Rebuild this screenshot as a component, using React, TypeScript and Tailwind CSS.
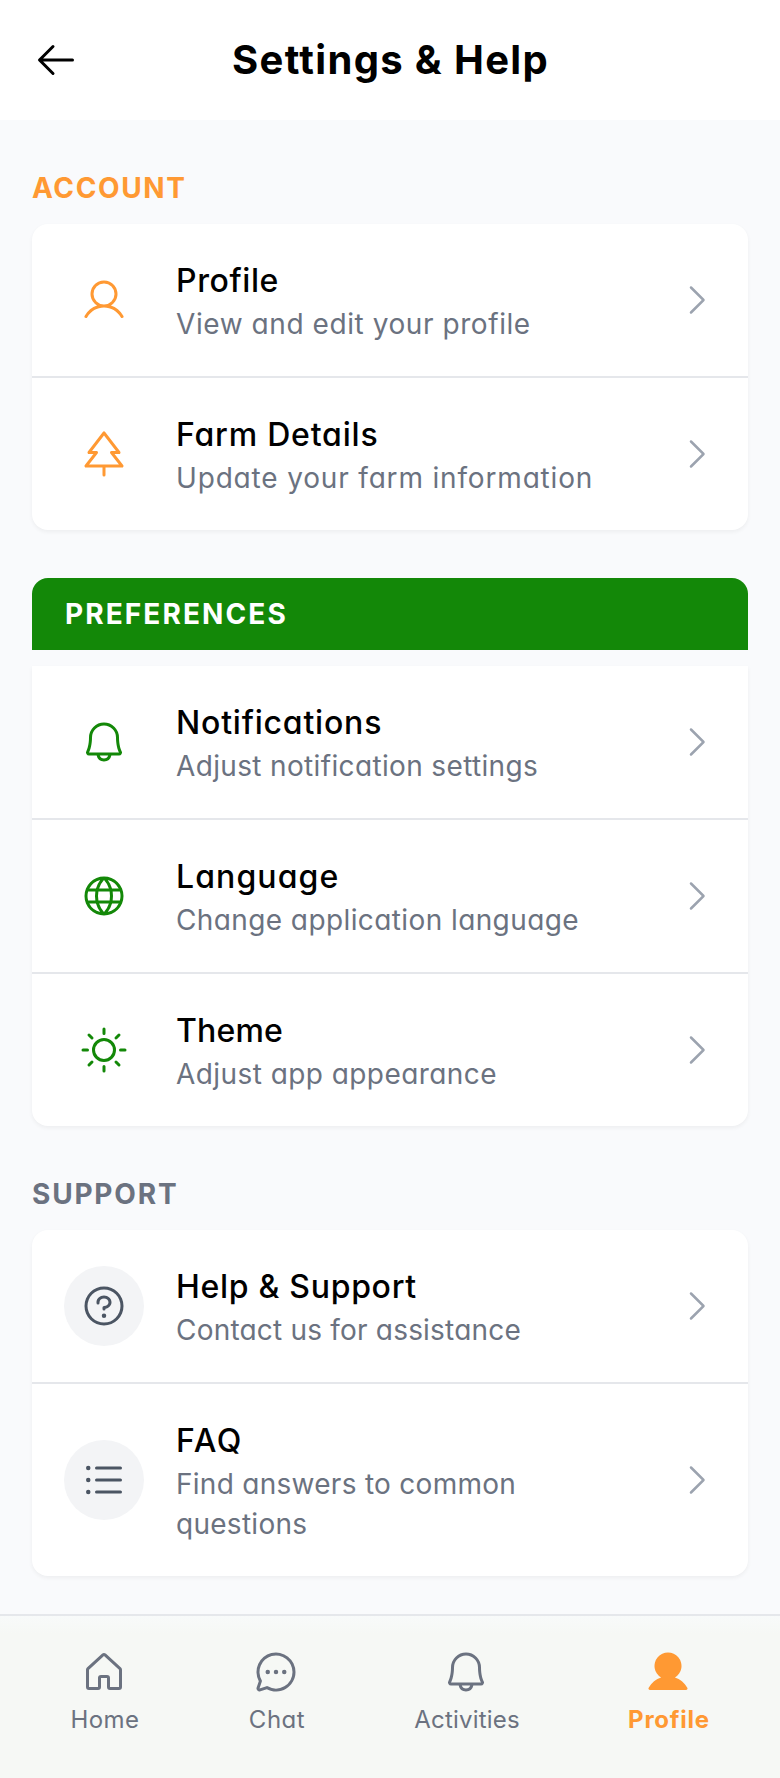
import type { ReactNode } from 'react';
import {
  PiArrowLeft,
  PiBell,
  PiCaretRight,
  PiChatCircleDots,
  PiGlobe,
  PiListBullets,
  PiQuestion,
  PiSun,
  PiTreeEvergreen,
  PiUser,
  PiUserFill,
} from 'react-icons/pi';

function HouseIcon() {
  return (
    <svg width="48" height="48" viewBox="0 0 256 256" fill="none" stroke="currentColor" strokeWidth="16" strokeLinecap="round" strokeLinejoin="round">
      <path d="M152,208V160a8,8,0,0,0-8-8H112a8,8,0,0,0-8,8v48a8,8,0,0,1-8,8H48a8,8,0,0,1-8-8V115.5a8.3,8.3,0,0,1,2.6-5.9l80-72.7a8,8,0,0,1,10.8,0l80,72.7a8.3,8.3,0,0,1,2.6,5.9V208a8,8,0,0,1-8,8H160A8,8,0,0,1,152,208Z" />
    </svg>
  );
}

interface RowProps {
  icon: ReactNode;
  iconClass: string;
  title: string;
  titleClass: string;
  text: string;
  textClass: string;
}

function Row({ icon, iconClass, title, titleClass, text, textClass }: RowProps) {
  return (
    <a href="#" className="flex items-center gap-8 p-8">
      <span className={`flex size-20 shrink-0 items-center justify-center rounded-full text-[48px] ${iconClass}`}>{icon}</span>
      <span className="min-w-0 flex-1">
        <span className={`block pt-0.5 text-[32px] leading-[46px] font-medium text-black ${titleClass}`}>{title}</span>
        <span className={`block text-[28px] leading-10 text-[#6b7280] ${textClass}`}>{text}</span>
      </span>
      <PiCaretRight className="size-10 shrink-0 text-[#9ca3af]" />
    </a>
  );
}

function Card({ className, children }: { className: string; children: ReactNode }) {
  return (
    <div className={`divide-y-2 divide-[#e5e7eb] bg-white shadow-[0_2px_4px_rgba(0,0,0,0.05)] ${className}`}>{children}</div>
  );
}

function NavItem({ icon, label, className }: { icon: ReactNode; label: string; className: string }) {
  return (
    <a href="#" className={`flex flex-col items-center gap-2 text-[24px] leading-8 whitespace-nowrap ${className}`}>
      <span className="flex size-12 items-center justify-center text-[48px]">{icon}</span>
      <span className="pl-0.5">{label}</span>
    </a>
  );
}

const ORANGE = 'text-[#ff9933]';
const GREEN = 'text-[#138808]';
const GRAY = 'bg-[#f3f4f6] text-[#4b5563]';

export default function App() {
  return (
    <div className="flex h-[1778px] w-[780px] flex-col bg-[#f9fafc] font-['Inter','Liberation_Sans',sans-serif] [font-feature-settings:'cv11']">
      <header className="flex h-[120px] shrink-0 items-center bg-white px-8">
        <PiArrowLeft className="size-12 shrink-0 text-black" />
        <h1 className="flex-1 pr-[47px] text-center text-[40px] font-bold tracking-[1.35px] text-black">Settings &amp; Help</h1>
      </header>

      <main className="flex flex-1 flex-col gap-12 px-8 pt-12">
        <section>
          <h2 className="mb-4 text-[28px] leading-10 font-bold tracking-[1.6px] text-[#ff9933]">ACCOUNT</h2>
          <Card className="rounded-2xl">
            <Row icon={<PiUser />} iconClass={ORANGE} title="Profile" titleClass="tracking-[0.6px]" text="View and edit your profile" textClass="tracking-[0.57px]" />
            <Row icon={<PiTreeEvergreen />} iconClass={ORANGE} title="Farm Details" titleClass="tracking-[0.8px]" text="Update your farm information" textClass="tracking-[0.83px]" />
          </Card>
        </section>

        <section>
          <h2 className="mb-4 rounded-t-2xl bg-[#138808] px-[33px] py-4 text-[28px] leading-10 font-bold tracking-[2.1px] text-white">PREFERENCES</h2>
          <Card className="rounded-b-2xl">
            <Row icon={<PiBell />} iconClass={GREEN} title="Notifications" titleClass="tracking-[0.8px]" text="Adjust notification settings" textClass="tracking-[0.35px]" />
            <Row icon={<PiGlobe />} iconClass={GREEN} title="Language" titleClass="tracking-[1.1px]" text="Change application language" textClass="tracking-[0.4px]" />
            <Row icon={<PiSun />} iconClass={GREEN} title="Theme" titleClass="tracking-[0.15px]" text="Adjust app appearance" textClass="tracking-[0.43px]" />
          </Card>
        </section>

        <section>
          <h2 className="mb-4 text-[28px] leading-10 font-bold tracking-[1.8px] text-[#6b7280]">SUPPORT</h2>
          <Card className="rounded-2xl">
            <Row icon={<PiQuestion />} iconClass={GRAY} title="Help &amp; Support" titleClass="tracking-[0.7px]" text="Contact us for assistance" textClass="tracking-[0.2px]" />
            <Row icon={<PiListBullets />} iconClass={GRAY} title="FAQ" titleClass="tracking-[1.7px]" text="Find answers to common questions" textClass="tracking-[0.28px]" />
          </Card>
        </section>
      </main>

      <footer className="h-[164px] shrink-0 border-t-2 border-[#e5e7eb] bg-[#f6f8f5] bg-[linear-gradient(to_bottom,#f8fafa,#f6f8f5_18px)] px-[70px] pt-8">
        <nav className="flex text-[#6b7280]">
          <NavItem icon={<HouseIcon />} label="Home" className="w-[68px] tracking-[0.4px]" />
          <NavItem icon={<PiChatCircleDots />} label="Chat" className="ml-[109px] w-[58px] tracking-[0.5px]" />
          <NavItem icon={<PiBell />} label="Activities" className="ml-[107px] w-[108px] tracking-[0.2px]" />
          <NavItem icon={<PiUserFill />} label="Profile" className="ml-[106px] w-[84px] font-bold tracking-[0.75px] text-[#ff9933]" />
        </nav>
      </footer>
    </div>
  );
}
